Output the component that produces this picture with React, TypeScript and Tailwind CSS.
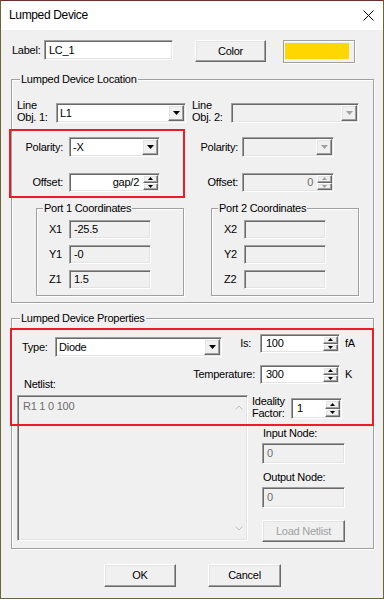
import React from "react";

const sunken =
  "border border-t-[#a0a0a0] border-l-[#a0a0a0] border-r-white border-b-white shadow-[inset_1px_1px_0_#696969,inset_-1px_-1px_0_#e3e3e3]";
const raised =
  "border border-t-white border-l-white border-r-[#696969] border-b-[#696969] shadow-[inset_-1px_-1px_0_#a0a0a0,inset_1px_1px_0_#e3e3e3]";
const etched = "border border-[#a0a0a0] shadow-[inset_1px_1px_0_#fff,1px_1px_0_#fff]";

function Tri({ off }: { off?: boolean }) {
  return (
    <svg width="7" height="4" viewBox="0 0 7 4" className={off ? "fill-[#a0a0a0]" : "fill-black"}>
      <path d="M0 0h7L3.5 4z" />
    </svg>
  );
}

function SmallTri({ up, off }: { up?: boolean; off?: boolean }) {
  return (
    <svg width="5" height="3" viewBox="0 0 5 3" className={off ? "fill-[#a0a0a0]" : "fill-black"}>
      <path d={up ? "M0 3h5L2.5 0z" : "M0 0h5L2.5 3z"} />
    </svg>
  );
}

function Combo({ w, value, off }: { w: string; value?: string; off?: boolean }) {
  return (
    <div className={`flex h-[20px] p-[1px] ${sunken} ${off ? "bg-[#f0f0f0]" : "bg-white"} ${w}`}>
      <div className="flex flex-1 items-center px-[2px]">{value}</div>
      <div className={`flex w-[16px] items-center justify-center ${raised} bg-[#f0f0f0]`}>
        <Tri off={off} />
      </div>
    </div>
  );
}

function Spin({ w, h, value, right, off }: { w: string; h: string; value: string; right?: boolean; off?: boolean }) {
  return (
    <div className={`flex p-[1px] ${sunken} ${off ? "bg-[#f0f0f0]" : "bg-white"} ${w} ${h}`}>
      <div
        className={`flex flex-1 items-center px-[4px] ${right ? "justify-end" : ""} ${off ? "text-[#6d6d6d]" : ""}`}
      >
        {value}
      </div>
      <div className="flex w-[15px] flex-col">
        <div className={`flex flex-1 items-center justify-center bg-[#f0f0f0] ${raised}`}>
          <SmallTri up off={off} />
        </div>
        <div className={`flex flex-1 items-center justify-center bg-[#f0f0f0] ${raised}`}>
          <SmallTri off={off} />
        </div>
      </div>
    </div>
  );
}

function Field({ w, h, value, off, dim }: { w: string; h: string; value?: string; off?: boolean; dim?: boolean }) {
  return (
    <div
      className={`flex items-center px-[4px] ${sunken} ${off ? "bg-[#f0f0f0]" : "bg-white"} ${dim ? "text-[#6d6d6d]" : ""} ${w} ${h}`}
    >
      {value}
    </div>
  );
}

function Button({ w, h, label, off }: { w: string; h: string; label: string; off?: boolean }) {
  return (
    <div
      className={`flex items-center justify-center bg-[#f0f0f0] ${raised} ${off ? "text-[#a0a0a0]" : ""} ${w} ${h}`}
    >
      {label}
    </div>
  );
}

function PortGroup({ n, values }: { n: number; values: string[] }) {
  return (
    <div className={`relative ml-[19px] mt-[16px] h-[88px] w-[148px] ${etched}`}>
      <span className="absolute left-[6px] top-[-7px] bg-[#f0f0f0] px-[1px] leading-[13px]">
        Port {n} Coordinates
      </span>
      <div className="flex flex-col gap-[6px] pl-[12px] pt-[11px]">
        {["X", "Y", "Z"].map((a, i) => (
          <div key={a} className="flex items-center">
            <div className="w-[20px]">
              {a}
              {n}
            </div>
            <Field w="w-[82px]" h="h-[19px]" value={values[i]} off />
          </div>
        ))}
      </div>
    </div>
  );
}

function LocCol({ n }: { n: number }) {
  const first = n === 1;
  return (
    <div className="w-[175px] shrink-0">
      <div className="mt-[18px] flex h-[25px] items-end">
        <div className="w-[39px] leading-[12px]">
          Line
          <br />
          Obj. {n}:
        </div>
        <Combo w={first ? "w-[130px]" : "w-[128px]"} value={first ? "L1" : ""} off={!first} />
      </div>
      <div className="mt-[14px] flex items-center">
        <div className="w-[46px] text-right">Polarity:</div>
        <div className={first ? "ml-[6px]" : "ml-[4px]"}>
          <Combo w={first ? "w-[91px]" : "w-[92px]"} value={first ? "-X" : ""} off={!first} />
        </div>
      </div>
      <div className="mt-[16px] flex items-center">
        <div className="w-[46px] text-right">Offset:</div>
        <div className={first ? "ml-[6px]" : "ml-[4px]"}>
          <Spin w={first ? "w-[91px]" : "w-[92px]"} h="h-[19px]" value={first ? "gap/2" : "0"} right off={!first} />
        </div>
      </div>
      <PortGroup n={n} values={first ? ["-25.5", "-0", "1.5"] : ["", "", ""]} />
    </div>
  );
}

export default function App() {
  return (
    <div className="relative flex h-[599px] w-[384px] flex-col border border-[#6a6636] border-t-[#6f302f] bg-[#f0f0f0] font-['Liberation_Sans',Arial,sans-serif] text-[11px] leading-[13px] tracking-[-0.25px] text-black">
      {/* title bar */}
      <div className="flex h-[29px] shrink-0 items-center justify-between bg-white pl-[8px] pr-[9px]">
        <span className="text-[12px] tracking-[-0.35px]">Lumped Device</span>
        <svg width="11" height="11" viewBox="0 0 11 11" className="stroke-black">
          <path d="M0.5 0.5l10 10M10.5 0.5l-10 10" strokeWidth="1" />
        </svg>
      </div>

      {/* label row */}
      <div className="mt-[10px] flex h-[23px] items-start pl-[11px]">
        <div className="mt-[4px] w-[32px]">Label:</div>
        <Field w="w-[129px]" h="h-[20px]" value="LC_1" />
        <div className="ml-[22px]">
          <Button w="w-[71px]" h="h-[22px]" label="Color" />
        </div>
        <div className={`ml-[17px] h-[23px] w-[72px] ${etched} bg-[#f0f0f0] pl-[1px] pt-[2px]`}>
          <div className="h-[16px] w-[64px] bg-[#ffd700]" />
        </div>
      </div>

      {/* location group */}
      <div className={`relative ml-[10px] mt-[16px] h-[224px] w-[363px] shrink-0 ${etched}`}>
        <span className="absolute left-[8px] top-[-7px] bg-[#f0f0f0] px-[1px]">Lumped Device Location</span>
        <div className="flex pl-[5px]">
          <LocCol n={1} />
          <LocCol n={2} />
        </div>
      </div>

      {/* properties group */}
      <div className={`relative ml-[10px] mt-[15px] h-[231px] w-[363px] shrink-0 ${etched}`}>
        <span className="absolute left-[8px] top-[-7px] bg-[#f0f0f0] px-[1px]">Lumped Device Properties</span>

        <div className="mt-[15px] flex items-start pl-[10px]">
          <div className="mt-[3px] flex items-center">
            <div className="w-[33px]">Type:</div>
            <Combo w="w-[167px]" value="Diode" />
          </div>
          <div className="flex h-[19px] items-center">
            <div className="w-[29px] text-right">Is:</div>
            <div className="ml-[9px]">
              <Spin w="w-[80px]" h="h-[19px]" value="100" />
            </div>
            <div className="ml-[5px]">fA</div>
          </div>
        </div>

        <div className="mt-[8px] flex h-[25px] items-start pl-[12px]">
          <div className="mt-[13px] w-[160px]">Netlist:</div>
          <div className="flex h-[19px] items-center">
            <div className="w-[71px] text-right">Temperature:</div>
            <div className="ml-[5px]">
              <Spin w="w-[80px]" h="h-[19px]" value="300" />
            </div>
            <div className="ml-[5px]">K</div>
          </div>
        </div>

        <div className="mt-[5px] flex pl-[5px]">
          <div className={`flex h-[146px] w-[231px] bg-[#f0f0f0] ${sunken}`}>
            <div className="flex-1 pl-[5px] pt-[4px] text-[#6d6d6d]">R1 1 0 100</div>
            <div className="flex w-[17px] flex-col items-center justify-between py-[9px]">
              <svg width="8" height="5" viewBox="0 0 8 5" fill="none" className="stroke-[#c0c0c0]">
                <path d="M0.5 4.5l3.5-3.5 3.5 3.5" />
              </svg>
              <svg width="8" height="5" viewBox="0 0 8 5" fill="none" className="stroke-[#c0c0c0]">
                <path d="M0.5 0.5l3.5 3.5 3.5-3.5" />
              </svg>
            </div>
          </div>

          <div className="ml-[4px] flex flex-col">
            <div className="flex h-[24px] items-end">
              <div className="w-[39px] leading-[12px]">
                Ideality
                <br />
                Factor:
              </div>
              <Spin w="w-[51px]" h="h-[21px]" value="1" />
            </div>
            <div className="ml-[11px] mt-[8px]">Input Node:</div>
            <div className="ml-[10px] mt-[3px]">
              <Field w="w-[83px]" h="h-[21px]" value="0" off dim />
            </div>
            <div className="ml-[11px] mt-[7px]">Output Node:</div>
            <div className="ml-[10px] mt-[3px]">
              <Field w="w-[83px]" h="h-[21px]" value="0" off dim />
            </div>
            <div className="ml-[10px] mt-[12px]">
              <Button w="w-[83px]" h="h-[22px]" label="Load Netlist" off />
            </div>
          </div>
        </div>
      </div>

      {/* buttons */}
      <div className="mt-[15px] flex pl-[103px]">
        <Button w="w-[72px]" h="h-[23px]" label="OK" />
        <div className="ml-[32px]">
          <Button w="w-[73px]" h="h-[23px]" label="Cancel" />
        </div>
      </div>

      {/* red annotation boxes */}
      <div className="absolute left-[8px] top-[128px] h-[69px] w-[176px] border-2 border-[#ed1c24]" />
      <div className="absolute left-[9px] top-[327px] h-[98px] w-[364px] border-2 border-[#ed1c24]" />
    </div>
  );
}
